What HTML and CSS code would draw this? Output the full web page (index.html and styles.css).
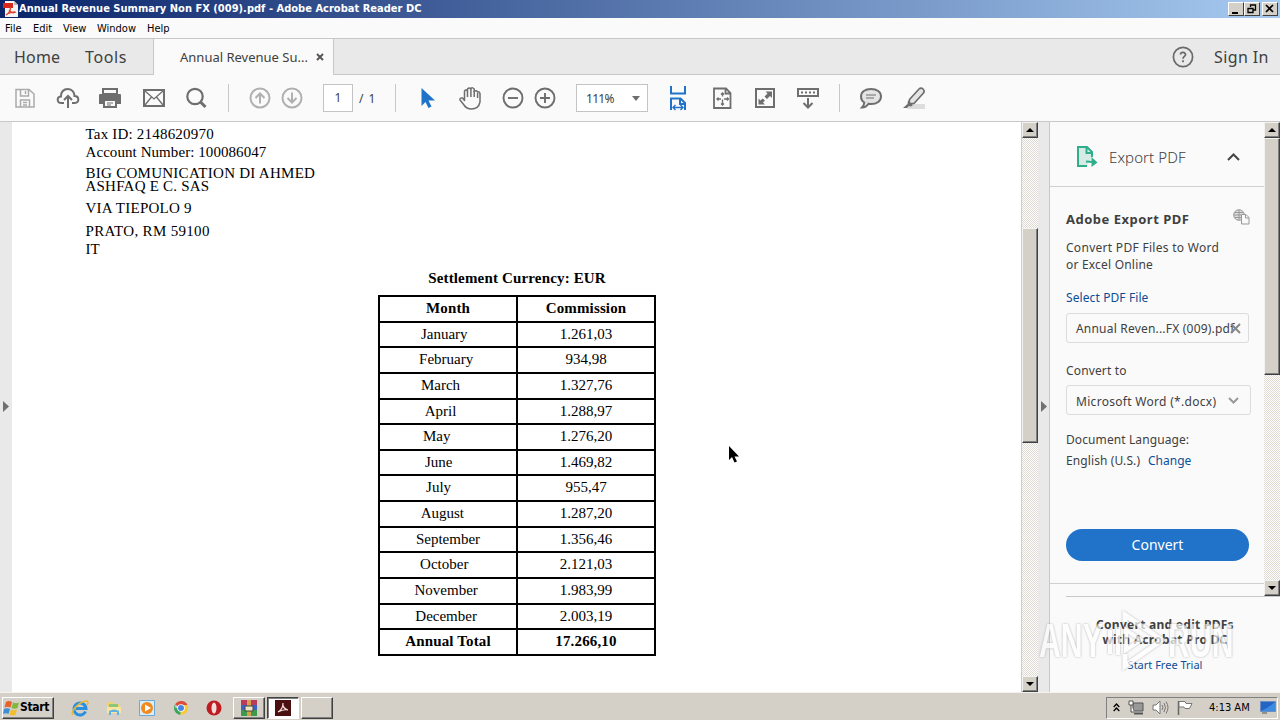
FILE: index.html
```html
<!DOCTYPE html>
<html lang="en">
<head>
  <meta charset="UTF-8" />
  <meta name="viewport" content="width=device-width, initial-scale=1.0" />
  <title>Annual Revenue Summary Non FX (009).pdf - Adobe Acrobat Reader DC</title>
  <link rel="stylesheet" href="styles.css">
</head>
<body>

<div class="title-bar">
  <svg class="app-icon" width="16" height="17" viewBox="0 0 16 17">
    <path d="M3 0h9l4 4v12H3z" fill="#f4f4f4"/><path d="M12 0v4h4z" fill="#bbb"/>
    <path d="M1 2h10v5H1z" fill="#d8281c"/>
    <path d="M4 14c4-2 5-6 4-8M7 9c2 3 5 3 7 2M5 13c3-2 5-2 8-2" fill="none" stroke="#e0402f" stroke-width="1.3"/>
  </svg>
  <span class="title-text">Annual Revenue Summary Non FX (009).pdf - Adobe Acrobat Reader DC</span>
  <div class="window-buttons">
    <div class="win-btn"><svg width="14" height="12"><path d="M3 9h6v2H3z"/></svg></div>
    <div class="win-btn"><svg width="14" height="12"><path d="M5.5 4V2h5v5H8M5 2h6M3 5.5h5v4H3zM2.500 5.500h6" fill="none" stroke="#000" stroke-width="1.300"/></svg></div>
    <div class="win-btn close"><svg width="14" height="12"><path d="M3 2l7 7M10 2L3 9" stroke="#000" stroke-width="1.700"/></svg></div>
  </div>
</div>

<div class="menu-bar">
  <span class="m-file">File</span><span class="m-edit">Edit</span><span class="m-view">View</span><span class="m-window">Window</span><span class="m-help">Help</span>
</div>

<div class="tab-bar">
  <div class="tab-left"><span class="t-home">Home</span><span class="t-tools">Tools</span></div>
  <div class="tab-active">
    <span class="t-doc">Annual Revenue Su...</span>
    <svg width="8" height="8" viewBox="0 0 8 8"><path d="M1 1l6 6M7 1L1 7" stroke="#555" stroke-width="1.900"/></svg>
  </div>
  <div class="tab-right">
    <svg width="22" height="22" viewBox="0 0 22 22" fill="none" stroke="#6a6a6a">
      <circle cx="11" cy="11" r="9.600" stroke-width="1.700"/>
      <path d="M8.500 8.500c.2-3 5.200-2.600 5 .2c-.1 1.600-2.500 1.800-2.500 4M11 14.300v2" stroke-width="1.800"/>
    </svg>
    <span class="t-sign">Sign In</span>
  </div>
</div>

<div class="toolbar">
  <svg class="icon" viewBox="0 0 24 24" fill="none" stroke="#aaa" stroke-width="1.500"><path d="M3 3.500h13l5 4.500v13H3zM7.500 4v6h8V4M12.500 5v3M7.500 21v-7h9v7M10 16.500h4M10 19h4"/></svg>
  <svg class="icon" viewBox="0 0 24 24" fill="none" stroke="#6e6e6e" stroke-width="2"><path d="M8 17H5.500C.5 17 .5 10.500 5 10.500C5 5 8 3 12 3s6.500 3.500 6.500 7c5 0 5 7 .5 7h-3M12 22V10M8 14l4-4l4 4"/></svg>
  <svg class="icon g18" viewBox="0 0 24 24"><path d="M5 3h14v5H5z" fill="none" stroke="#6e6e6e" stroke-width="2"/><path d="M2 8h20q1 0 1 1v9h-4v-4H5v4H1V9q0-1 1-1z" fill="#6e6e6e"/><path d="M6 14h12v7H6z" fill="#fafafa" stroke="#6e6e6e" stroke-width="2"/><path d="M9 17h6M9 19h4" stroke="#6e6e6e"/></svg>
  <svg class="icon g20" viewBox="0 0 24 24" fill="none" stroke="#6e6e6e"><path d="M2 4h20v16H2z" stroke-width="2"/><path d="M3 5l9 8l9-8M3 19l6.500-8M21 19l-6.500-8" stroke-width="1.300"/></svg>
  <svg class="icon g18" viewBox="0 0 24 24" fill="none" stroke="#6e6e6e"><circle cx="11" cy="10.500" r="7.700" stroke-width="2.200"/><path d="M16.500 16l5 5" stroke-width="3"/></svg>
  <i class="sep g20"></i>
  <svg class="icon" viewBox="0 0 24 24" fill="none" stroke="#b0b0b0" stroke-width="2"><circle cx="12" cy="12" r="9.500"/><path d="M12 17.500V7.500M7.500 12L12 7.500l4.500 4.500"/></svg>
  <svg class="icon g8" viewBox="0 0 24 24" fill="none" stroke="#b0b0b0" stroke-width="2"><circle cx="12" cy="12" r="9.500"/><path d="M12 6.500v10M7.500 12l4.500 4.500l4.500-4.500"/></svg>
  <div class="page-box">1</div>
  <span class="page-total">/ 1</span>
  <i class="sep g18"></i>
  <svg class="icon" viewBox="0 0 24 24"><path d="M6.500 2v18l4-4l3 6l3-1.500l-3-6H20z" fill="#2173c9"/></svg>
  <svg class="icon" viewBox="0 0 24 24" fill="#fafafa" stroke="#6e6e6e" stroke-width="1.500" stroke-linejoin="round"><path d="M6.500 14.500V5q1.500-2 3 0V3q1.700-2.200 3.400 0V2.500q1.700-1.500 3.300.5v2.500q1.800-1.500 3.500.2q1.800-.2 2.300 1.800V16q-1.500 7-8.500 7q-5 0-7.500-4l-4-5q-.5-2.500 2.500-2z"/><path d="M9.500 5v6M12.900 3v8M16.200 5v6M19.600 6.500V12" fill="none"/></svg>
  <svg class="icon" viewBox="0 0 24 24" fill="none" stroke="#6e6e6e" stroke-width="1.900"><circle cx="12" cy="12" r="9.500"/><path d="M7 12h10"/></svg>
  <svg class="icon g8" viewBox="0 0 24 24" fill="none" stroke="#6e6e6e" stroke-width="1.900"><circle cx="12" cy="12" r="9.500"/><path d="M7 12h10M12 7v10"/></svg>
  <div class="zoom-box"><span>111%</span><svg width="8" height="5"><path d="M0 0h8L4 5z" fill="#6e6e6e"/></svg></div>
  <svg class="icon tall g18" viewBox="0 0 24 26" fill="none" stroke="#2173c9" stroke-width="2"><path d="M5 1v7.500h14V1M5 25V13.500h9.500l4.500 4.500V25M14 14v5h5"/><path d="M7 22.500h10M9.500 20l-2.500 2.500l2.500 2.500M14.500 20l2.500 2.500l-2.500 2.500" stroke-width="1.400"/></svg>
  <svg class="icon g20" viewBox="0 0 24 24" fill="none" stroke="#6e6e6e"><path d="M4 2.500h12l4.500 4.500v15H4zM15.500 3v4.500h4.500" stroke-width="1.800"/><path d="M12.500 7v3.500M12.500 13.500V19M7 13h4M14 13h4.500M11 8.500l1.500-1.500L14 8.500M11 17.500l1.500 1.500l1.500-1.500M8.500 11.500L7 13l1.500 1.500M17 11.500l1.500 1.500L17 14.500" stroke-width="1.300"/></svg>
  <svg class="icon" viewBox="0 0 24 24"><path d="M3 3h18v18H3z" fill="none" stroke="#6e6e6e" stroke-width="2"/><path d="M12.500 5.500H19v6.500l-2-2l-3 3l-2.500-2.500l3-3zM5.500 12.500v6H12l-2-2l2-2l-2.500-2l-2 2z" fill="#6e6e6e"/></svg>
  <svg class="icon" viewBox="0 0 24 24" fill="none" stroke="#6e6e6e" stroke-width="2"><path d="M2 3h20v7H2z"/><path d="M5 6.500h14" stroke-dasharray="2 2"/><path d="M12 12v9M7.500 17l4.500 4.500l4.500-4.500"/></svg>
  <i class="sep"></i>
  <svg class="icon" viewBox="0 0 24 24" fill="#e4e4e4" stroke="#6e6e6e" stroke-width="2"><path d="M12 3c6 0 10 3 10 7.500s-4 7.500-10 7.500q-1.500 0-2.500-.3Q7 21.500 3 21.500q2-2 2.300-5Q2 14.500 2 10.500c0-4.500 4-7.500 10-7.500z"/><path d="M7 9h10M7 12h8" stroke-width="1.200"/></svg>
  <svg class="icon" viewBox="0 0 24 24"><path d="M8 18h15v5H5z" fill="#ddd"/><path d="M7.500 13.500L17 3q2-2 4 0t.5 4L12 17.500H7z" fill="#e4e4e4" stroke="#6e6e6e" stroke-width="1.700"/><path d="M6 14.500l5 4.500l-2 1.500l-2-.5l-2 2H1l4.500-4z" fill="#6e6e6e"/></svg>
</div>

<div class="workspace">
  <div class="left-strip"><svg width="6" height="11"><path d="M0 0l6 5.500L0 11z" fill="#707070"/></svg></div>

  <div class="page">
    <div class="address">
      <p class="a-tax">Tax ID: 2148620970</p>
      <p class="a-acc">Account Number: 100086047</p>
      <p class="a-big">BIG COMUNICATION DI AHMED</p>
      <p class="a-ash">ASHFAQ E C. SAS</p>
      <p class="a-via">VIA TIEPOLO 9</p>
      <p class="a-prato">PRATO, RM 59100</p>
      <p class="a-it">IT</p>
    </div>

    <h2>Settlement Currency: EUR</h2>
    <div class="revenue">
      <div class="row bold"><span>Month</span><span>Commission</span></div>
      <div class="row"><span>January  </span><span>1.261,03</span></div>
      <div class="row"><span>February </span><span>934,98</span></div>
      <div class="row"><span>March    </span><span>1.327,76</span></div>
      <div class="row"><span>April    </span><span>1.288,97</span></div>
      <div class="row"><span>May      </span><span>1.276,20</span></div>
      <div class="row"><span>June     </span><span>1.469,82</span></div>
      <div class="row"><span>July     </span><span>955,47</span></div>
      <div class="row"><span>August   </span><span>1.287,20</span></div>
      <div class="row"><span>September</span><span>1.356,46</span></div>
      <div class="row"><span>October  </span><span>2.121,03</span></div>
      <div class="row"><span>November </span><span>1.983,99</span></div>
      <div class="row"><span>December </span><span>2.003,19</span></div>
      <div class="row bold"><span>Annual Total</span><span>17.266,10</span></div>
    </div>
  </div>

  <div class="scrollbar doc-scroll">
    <div class="sb-btn"><svg width="8" height="4"><path d="M4 0l4 4H0z"/></svg></div>
    <div class="sb-thumb"></div>
    <div class="sb-btn"><svg width="8" height="4"><path d="M0 0h8L4 4z"/></svg></div>
  </div>

  <div class="right-strip"><svg width="6" height="11"><path d="M0 0l6 5.500L0 11z" fill="#707070"/></svg></div>

  <div class="side">
    <div class="side-top">
      <div class="panel">
        <div class="panel-head">
          <svg width="22" height="24" viewBox="0 0 22 24"><path d="M2 2h9l5 5v5l-5 9H2z" fill="#d5ebe4"/><path d="M16 12V7l-5-5H2v19h9M10.500 2.500V8H16" fill="none" stroke="#2fae8c" stroke-width="2"/><path d="M10 16.500l7 .5" stroke="#2fae8c" stroke-width="2"/><path d="M15.500 12l6 5.500l-6 4.500z" fill="#2fae8c"/></svg>
          <span class="p-export">Export PDF</span>
          <svg class="chev-up" width="13" height="8" viewBox="0 0 13 8"><path d="M1 7l5.500-5.500L12 7" fill="none" stroke="#444" stroke-width="2"/></svg>
        </div>
        <div class="panel-body">
          <div class="body-title"><span class="p-adobe">Adobe Export PDF</span>
            <svg width="17" height="16" viewBox="0 0 17 16" fill="none" stroke="#999"><circle cx="6" cy="6" r="5.300" fill="#ddd"/><path d="M6 1v10M1 6h10M2 3.500h8M2 8.500h8"/><path d="M8.500 5.500h4.500l3 3V15H8.500zM12.500 6v3H16" fill="#fafafa"/></svg>
          </div>
          <p class="p-conv">Convert PDF Files to Word</p>
          <p class="p-excel">or Excel Online</p>
          <p class="p-select link">Select PDF File</p>
          <div class="file-box"><span>Annual Reven...FX (009).pdf</span><svg width="11" height="11" viewBox="0 0 11 11"><path d="M1 1l9 9M10 1l-9 9" stroke="#888" stroke-width="2"/></svg></div>
          <p class="p-to">Convert to</p>
          <div class="format-box"><span>Microsoft Word (*.docx)</span><svg width="11" height="7" viewBox="0 0 11 7"><path d="M1 1l4.500 4.500L10 1" fill="none" stroke="#999" stroke-width="2"/></svg></div>
          <p class="p-lang">Document Language:</p>
          <p class="p-eng"><span class="p-us">English (U.S.)</span><span class="p-change link">Change</span></p>
          <div class="convert-btn"><span>Convert</span></div>
        </div>
      </div>
      <div class="scrollbar side-scroll">
        <div class="sb-btn"><svg width="8" height="4"><path d="M4 0l4 4H0z"/></svg></div>
        <div class="sb-thumb"></div>
        <div class="sb-btn"><svg width="8" height="4"><path d="M0 0h8L4 4z"/></svg></div>
      </div>
    </div>
    <div class="promo">
      <p class="pr-1">Convert and edit PDFs</p>
      <p class="pr-2">with Acrobat Pro DC</p>
      <p class="pr-3 link">Start Free Trial</p>
    </div>
  </div>
</div>

<div class="watermark">
  <span class="w-any">ANY</span>
  <svg width="60" height="62" viewBox="0 0 60 62" fill="none" stroke="#fff" stroke-width="5"><path d="M19 12V5l37 25L19 56V44"/><path d="M4 20v24M12 17v28M20 20v20l15-10z" stroke-width="4"/></svg>
  <span class="w-run">RUN</span>
</div>

<svg class="pointer" width="10" height="17" viewBox="0 0 10 17"><path d="M0 0v14l3-3l2.500 5.500l2.500-1l-2.500-5H10z"/></svg>

<div class="taskbar">
  <div class="start-btn">
    <svg width="17" height="16" viewBox="0 0 17 16"><path d="M3 2q3-2 6 0L7.500 7.500q-3-1.500-6 0z" fill="#e8602c"/><path d="M10 2.500q3 1.500 6 0l-1.500 5.500q-3 1.500-6 0z" fill="#7fb93c"/><path d="M1 9q3-1.500 6 0l-1.500 5q-3-1.500-5.500 0z" fill="#3f8fd8"/><path d="M8 9.500q3 1.500 6 0L12.500 15q-3 1-6-.5z" fill="#f5bd2c"/></svg>
    <span>Start</span>
  </div>
  <div class="quick">
    <svg width="18" height="18" viewBox="0 0 18 18"><path d="M14.500 12.500A6 6 0 1 1 15 9.500H5" fill="none" stroke="#2b8fe0" stroke-width="3"/><path d="M2 16C-1 13 8 2 16 2q2 1 0 4" fill="none" stroke="#e8b92e" stroke-width="1.500"/></svg>
    <svg width="18" height="18" viewBox="0 0 18 18"><path d="M2 3h6l1 2h6v9H2z" fill="#f0d56c"/><path d="M4 5h9v3H4z" fill="#8bc67a"/><path d="M2 8h14v6H2z" fill="#f8e6a0"/><path d="M4 16v-4q5-3 10 0v4h-2v-3H6v3z" fill="#5fb2e6"/></svg>
    <svg width="18" height="18" viewBox="0 0 18 18"><path d="M1.500 1.500h15v15h-15z" fill="#d9ecf8" stroke="#6aa9d8"/><circle cx="9" cy="9" r="6" fill="#f08a1c"/><path d="M7 5.500l6 3.500l-6 3.500z" fill="#fff"/></svg>
    <svg width="18" height="18" viewBox="0 0 18 18"><path d="M9 9L3 5.500A7 7 0 0 1 15.500 6z" fill="#e04a3a"/><path d="M9 9H3.500L3 5.500A7 7 0 0 0 8.500 16z" fill="#3ca55a"/><path d="M9 9l-.5 7A7 7 0 0 0 15.500 6H9z" fill="#f5cb3c"/><circle cx="9" cy="9" r="3.800" fill="#fff"/><circle cx="9" cy="9" r="3" fill="#4486e8"/></svg>
    <svg width="18" height="18" viewBox="0 0 18 18"><circle cx="9" cy="9" r="7.500" fill="#c01c20"/><ellipse cx="9" cy="9" rx="2.500" ry="5.500" fill="#f0dede"/></svg>
  </div>
  <div class="task-btn"><svg width="18" height="18" viewBox="0 0 18 18"><path d="M1 1h16v5H1z" fill="#b83a5c"/><path d="M1 6h16v5H1z" fill="#3c62c4"/><path d="M1 11h16v6H1z" fill="#3d9a48"/><path d="M7 1h4v16H7z" fill="#d8a04a"/><path d="M5 7h8v5H5z" fill="#efe4c0" stroke="#444"/></svg></div>
  <div class="task-btn pressed"><svg width="16" height="16" viewBox="0 0 16 16"><path d="M0 0h16v16H0z" fill="#4a0f10"/><path d="M3 12q5-3 5-9q-1 5 5 7q-4-1-10 2" fill="none" stroke="#f4dcdc" stroke-width="1.200"/></svg></div>
  <div class="task-btn"></div>
  <div class="tray">
    <svg width="7" height="9" viewBox="0 0 7 9" fill="none" stroke="#000" stroke-width="1.300"><path d="M.7 4l2.800-3l2.800 3M.7 8l2.800-3l2.800 3"/></svg>
    <svg class="t-net" width="16" height="15" viewBox="0 0 16 15"><path d="M5 3h10v8H5z" fill="#999" stroke="#555"/><path d="M6 13.500h9" stroke="#555" stroke-width="2"/><path d="M1 1h4v4H1zM3 5v7h3" fill="#fff" stroke="#555"/></svg>
    <svg class="t-vol" width="17" height="15" viewBox="0 0 17 15" fill="none" stroke="#777"><path d="M1 5h3l4-4v13l-4-4H1z" fill="#fff"/><path d="M10 5q2 2.500 0 5M12 3q3 4.500 0 9M14 1.500q4 6 0 12"/></svg>
    <svg class="t-flag" width="16" height="15" viewBox="0 0 16 15"><path d="M1.500 1v14" stroke="#666" stroke-width="1.500"/><path d="M2 1.500h6l1 2h6l-2.500 5H8l-1-1.500H2z" fill="#fff" stroke="#777"/></svg>
    <span>4:13 AM</span>
    <svg class="t-desk" width="16" height="13" viewBox="0 0 16 13"><path d="M.5.500h15v10H.5z" fill="#2464c4" stroke="#6b8fc0"/><path d="M1 10q7-3 14-9v9z" fill="#3b8be0"/><path d="M2 12h5" stroke="#555"/></svg>
  </div>
</div>

</body>
</html>
```
FILE: styles.css
```css
* {
  box-sizing: border-box;
}

body {
  margin: 0;
  width: 1280px;
  height: 720px;
  overflow: hidden;
  display: flex;
  flex-direction: column;
  background: #fafafa;
  font-family: "Noto Sans", "Open Sans", sans-serif;
  font-size: 12px;
  color: #404040;
}

p, h2 {
  margin: 0;
}

span, p, h2 {
  white-space: pre;
}

svg {
  flex: none;
  display: block;
}

/* title + menu */
.title-bar {
  height: 18px;
  display: flex;
  align-items: center;
  padding: 0 2px 0 2px;
  background: linear-gradient(to right, #0a246a, #a6caf0);
  color: #fff;
}

.title-text {
  margin-left: 1px;
  letter-spacing: 0.02px;
  font: bold 11px/18px "DejaVu Sans Condensed", "DejaVu Sans", sans-serif;
}

.window-buttons {
  display: flex;
  margin-left: auto;
}

.win-btn {
  width: 16px;
  height: 14px;
  background: #d4d0c8;
  border: 1px solid;
  border-color: #fff #404040 #404040 #fff;
}

.win-btn.close {
  margin-left: 2px;
}

.menu-bar {
  height: 20px;
  display: flex;
  padding-left: 5px;
  font: 11px/21px "DejaVu Sans Condensed", "DejaVu Sans", sans-serif;
  color: #000;
}

.m-file { width: 28px; }
.m-edit { width: 30px; }
.m-view { width: 34px; }
.m-window { width: 50px; }

/* tabs */
.tab-bar {
  height: 37px;
  display: flex;
  border-top: 1px solid #c8c8c8;
  font-size: 16px;
  line-height: 36px;
}

.tab-left {
  width: 154px;
  display: flex;
  padding-left: 14px;
  background: #e9e9e9;
  border-right: 1px solid #c8c8c8;
  border-bottom: 1px solid #c8c8c8;
}

.t-home { width: 71px; letter-spacing: 0.2px; }
.t-tools { letter-spacing: 0.6px; }

.tab-active {
  width: 179px;
  display: flex;
  align-items: center;
  padding-left: 26px;
}

.t-doc {
  width: 136px;
  font-size: 13px;
}

.tab-right {
  flex: 1;
  display: flex;
  align-items: center;
  justify-content: flex-end;
  padding-right: 11px;
  background: #e9e9e9;
  border-left: 1px solid #c8c8c8;
  border-bottom: 1px solid #c8c8c8;
}

.t-sign {
  width: 55px;
  margin-left: 20px;
  letter-spacing: 0.4px;
}

/* toolbar */
.toolbar {
  height: 47px;
  display: flex;
  align-items: center;
  padding-left: 13px;
  border-bottom: 1px solid #c8c8c8;
}

.toolbar > * {
  flex: none;
  margin-left: 19px;
}

.toolbar > :first-child {
  margin-left: 0;
}

.icon {
  width: 24px;
  height: 24px;
}

.icon.tall {
  height: 26px;
}

.toolbar > .g8 { margin-left: 8px; }
.toolbar > .g18 { margin-left: 18px; }
.toolbar > .g20 { margin-left: 20px; }

.sep {
  width: 1px;
  height: 28px;
  background: #c8c8c8;
}

.page-box {
  width: 30px;
  height: 28px;
  border: 1px solid #c4c4c4;
  background: #fff;
  text-align: center;
  line-height: 26px;
}

.toolbar > .page-total {
  width: 18px;
  margin-left: 6px;
  letter-spacing: 1px;
}

.zoom-box {
  width: 72px;
  height: 28px;
  display: flex;
  align-items: center;
  justify-content: space-between;
  padding: 0 7px 0 9px;
  border: 1px solid #c4c4c4;
  background: #fff;
  letter-spacing: -0.7px;
}

/* document area */
.workspace {
  height: 570px;
  display: flex;
}

.left-strip {
  width: 12px;
  padding: 279px 0 0 3px;
  background: #e9e9e9;
}

.page {
  width: 1009px;
  padding-left: 74px;
  background: #fff;
  color: #000;
  font: 15px/18px "Liberation Serif", serif;
}

.address {
  height: 147px;
  margin-left: -0.5px;
  padding-top: 3px;
}

.a-tax { letter-spacing: 0.2px; }
.a-acc { margin-bottom: 3px; letter-spacing: 0.07px; }
.a-big, .a-ash { line-height: 13px; }
.a-big { padding-top: 3px; letter-spacing: 0.27px; }
.a-ash { margin-bottom: 6px; letter-spacing: 0.22px; }
.a-via { margin-bottom: 5px; letter-spacing: 0.25px; }
.a-prato { letter-spacing: 0.33px; }

.page h2 {
  width: 278px;
  margin-left: 292px;
  font-size: 15px;
  letter-spacing: 0.16px;
  text-align: center;
}

.revenue {
  width: 278px;
  margin: 8px 0 0 292px;
  border: 2px solid #000;
  border-bottom: 0;
}

.row {
  height: 25.65px;
  display: flex;
  line-height: 22px;
  border-bottom: 2px solid #000;
}

.row span {
  width: 136px;
  flex: none;
  text-align: center;
}

.row span:first-child {
  width: 138px;
  border-right: 2px solid #000;
}

.bold {
  font-weight: bold;
  line-height: 23px;
  letter-spacing: 0.15px;
}

/* scrollbars */
.scrollbar {
  display: flex;
  flex-direction: column;
  background: repeating-conic-gradient(#fff 0 25%, #dedad2 0 50%) 0 0 / 2px 2px;
}

.sb-btn {
  height: 16px;
  flex: none;
  display: flex;
  align-items: center;
  justify-content: center;
}

.sb-btn, .sb-thumb {
  background: #d4d0c8;
  border: 1px solid;
  border-color: #f4f2ee #404040 #404040 #f4f2ee;
  box-shadow: inset -1px -1px #808080;
}

.sb-btn:last-child {
  margin-top: auto;
}

.doc-scroll {
  width: 17px;
  border-left: 1px solid #ccc;
}

.doc-scroll .sb-thumb {
  height: 215px;
  margin-top: 90px;
}

.right-strip {
  width: 12px;
  padding: 279px 0 0 3px;
  background: #e9e9e9;
  border-right: 1px solid #c8c8c8;
}

/* export panel */
.side {
  width: 230px;
}

.side-top {
  height: 474px;
  display: flex;
}

.panel {
  width: 214px;
  height: 462px;
  border-bottom: 1px solid #d0d0d0;
}

.side-scroll {
  width: 16px;
}

.side-scroll .sb-thumb {
  height: 237px;
}

.panel-head {
  height: 65px;
  display: flex;
  align-items: center;
  padding: 6px 0 0 26px;
  border-bottom: 1px solid #d0d0d0;
}

.p-export {
  width: 118px;
  margin-left: 11px;
  font-size: 15px;
  font-weight: 300;
  letter-spacing: 0.1px;
}

.panel-body {
  padding: 22px 0 0 16px;
}

.body-title {
  height: 21px;
  display: flex;
}

.p-adobe {
  width: 167px;
  font: bold 13px/21px "Noto Sans", sans-serif;
  letter-spacing: 0.5px;
}

.panel-body p {
  line-height: 17px;
}

.p-conv { margin-top: 9px; letter-spacing: 0.29px; }
.p-excel { letter-spacing: 0.2px; }
.p-select { margin-top: 16px; letter-spacing: 0.1px; }
.p-to { letter-spacing: 0.15px; }
.p-lang { letter-spacing: 0.1px; }

.link {
  color: #0c4f96;
}

.file-box, .format-box {
  height: 30px;
  display: flex;
  align-items: center;
  padding-left: 9px;
  border: 1px solid #dcdcdc;
  border-radius: 3px;
}

.file-box {
  width: 183px;
  margin: 7px 0 19px;
}

.file-box span {
  width: 154px;
  letter-spacing: 0.2px;
}

.format-box {
  width: 185px;
  margin: 6px 0 16px;
}

.format-box span {
  width: 152px;
  padding-top: 2px;
  letter-spacing: 0.3px;
}

.p-eng {
  display: flex;
  margin-top: 4px;
}

.p-us { width: 82px; letter-spacing: 0.1px; }

.convert-btn {
  width: 183px;
  height: 32px;
  margin-top: 60px;
  border-radius: 16px;
  background: #2173c9;
  color: #fff;
  font-size: 14px;
  line-height: 32px;
  text-align: center;
}

.promo {
  height: 96px;
  width: 214px;
  margin-left: 16px;
  border-top: 1px solid #c8c8c8;
  padding: 20px 16px 0 0;
  text-align: center;
  line-height: 15px;
}

.pr-1, .pr-2 {
  font-weight: bold;
  letter-spacing: 0.28px;
}

.pr-3 {
  margin-top: 10px;
  font-size: 11px;
}

/* overlays */
.watermark {
  position: absolute;
  left: 1039px;
  top: 609px;
  width: 194px;
  height: 64px;
  display: flex;
  align-items: center;
  justify-content: space-between;
  opacity: 0.7;
  filter: drop-shadow(0 0 1px #999);
}

.watermark span {
  width: 65px;
  font: bold 48px/64px "Liberation Sans", sans-serif;
  color: #fff;
  transform: scaleX(0.63);
  transform-origin: left;
}

.pointer {
  position: absolute;
  left: 729px;
  top: 446px;
}

/* taskbar */
.taskbar {
  height: 28px;
  display: flex;
  align-items: center;
  padding: 2px 2px 0;
  background: #d4d0c8;
  border-top: 1px solid #f4f2ee;
  color: #000;
  font-family: "DejaVu Sans Condensed", "DejaVu Sans", sans-serif;
  font-size: 11px;
}

.start-btn, .task-btn {
  height: 22px;
  display: flex;
  align-items: center;
  border: 1px solid;
  border-color: #fff #404040 #404040 #fff;
  box-shadow: inset -1px -1px #808080;
}

.start-btn {
  width: 52px;
  font-weight: bold;
}

.start-btn span {
  font-size: 12px;
  line-height: 14px;
  padding-bottom: 1px;
  letter-spacing: -0.3px;
}

.quick {
  display: flex;
  gap: 15.500px;
  margin: 0 10px 0 17px;
}

.task-btn {
  width: 32px;
  justify-content: center;
  margin-right: 2px;
}

.task-btn.pressed {
  background: #fff;
  border-color: #404040 #fff #fff #404040;
  box-shadow: inset 1px 1px #808080;
}

.tray {
  width: 172px;
  height: 22px;
  margin-left: auto;
  display: flex;
  align-items: center;
  padding-left: 6px;
  border: 1px solid;
  border-color: #808080 #fff #fff #808080;
}

.tray span {
  width: 44px;
}

.t-net { margin-left: 8px; }
.t-vol { margin-left: 8px; }
.t-flag { margin: 0 16px 0 8px; }
.t-desk { margin-left: 7px; }
```
